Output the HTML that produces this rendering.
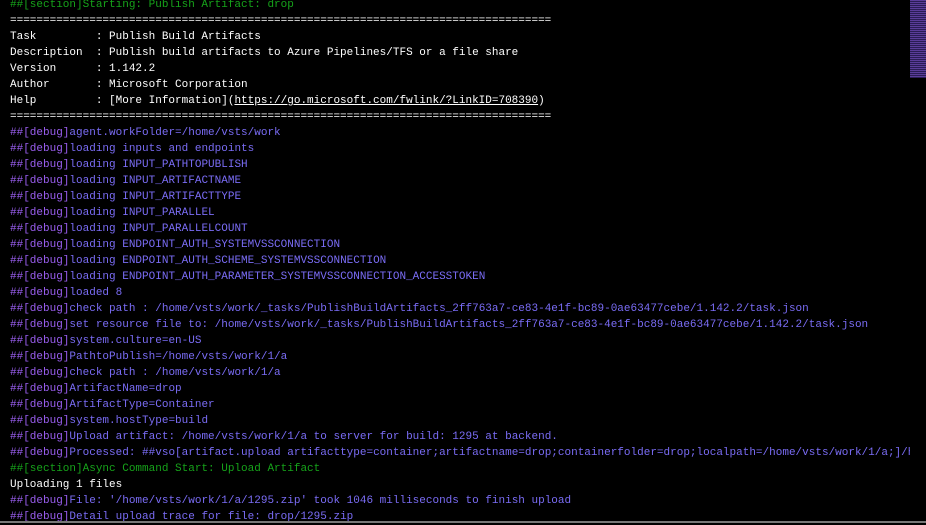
<!DOCTYPE html>
<html><head><style>
html,body{margin:0;padding:0;background:#000;width:926px;height:523px;overflow:hidden}
pre{position:absolute;left:10px;top:-3px;margin:0;font-family:"Liberation Mono",monospace;font-size:11px;line-height:16px;color:#fff;white-space:pre}
.g{color:#16a31a}.d{color:#9a5ef0}.b{color:#7a6cf5}.u{text-decoration:underline}
.mm{position:absolute;left:910px;top:0;width:16px;height:78px;background:repeating-linear-gradient(#5a3d9a 0 1px,#2a1d55 1px 2px);z-index:2}
.cl{position:absolute;left:910px;top:78px;width:16px;height:445px;background:#000;z-index:1}
.bar{position:absolute;left:0;top:521px;width:926px;height:2px;background:#777;z-index:3}
</style></head><body>
<pre><span class="g">##[section]Starting: Publish Artifact: drop</span>
==================================================================================
Task         : Publish Build Artifacts
Description  : Publish build artifacts to Azure Pipelines/TFS or a file share
Version      : 1.142.2
Author       : Microsoft Corporation
Help         : [More Information](<span class="u">https://go.microsoft.com/fwlink/?LinkID=708390</span>)
==================================================================================
<span class="d">##[debug]</span><span class="b">agent.workFolder=/home/vsts/work</span>
<span class="d">##[debug]</span><span class="b">loading inputs and endpoints</span>
<span class="d">##[debug]</span><span class="b">loading INPUT_PATHTOPUBLISH</span>
<span class="d">##[debug]</span><span class="b">loading INPUT_ARTIFACTNAME</span>
<span class="d">##[debug]</span><span class="b">loading INPUT_ARTIFACTTYPE</span>
<span class="d">##[debug]</span><span class="b">loading INPUT_PARALLEL</span>
<span class="d">##[debug]</span><span class="b">loading INPUT_PARALLELCOUNT</span>
<span class="d">##[debug]</span><span class="b">loading ENDPOINT_AUTH_SYSTEMVSSCONNECTION</span>
<span class="d">##[debug]</span><span class="b">loading ENDPOINT_AUTH_SCHEME_SYSTEMVSSCONNECTION</span>
<span class="d">##[debug]</span><span class="b">loading ENDPOINT_AUTH_PARAMETER_SYSTEMVSSCONNECTION_ACCESSTOKEN</span>
<span class="d">##[debug]</span><span class="b">loaded 8</span>
<span class="d">##[debug]</span><span class="b">check path : /home/vsts/work/_tasks/PublishBuildArtifacts_2ff763a7-ce83-4e1f-bc89-0ae63477cebe/1.142.2/task.json</span>
<span class="d">##[debug]</span><span class="b">set resource file to: /home/vsts/work/_tasks/PublishBuildArtifacts_2ff763a7-ce83-4e1f-bc89-0ae63477cebe/1.142.2/task.json</span>
<span class="d">##[debug]</span><span class="b">system.culture=en-US</span>
<span class="d">##[debug]</span><span class="b">PathtoPublish=/home/vsts/work/1/a</span>
<span class="d">##[debug]</span><span class="b">check path : /home/vsts/work/1/a</span>
<span class="d">##[debug]</span><span class="b">ArtifactName=drop</span>
<span class="d">##[debug]</span><span class="b">ArtifactType=Container</span>
<span class="d">##[debug]</span><span class="b">system.hostType=build</span>
<span class="d">##[debug]</span><span class="b">Upload artifact: /home/vsts/work/1/a to server for build: 1295 at backend.</span>
<span class="d">##[debug]</span><span class="b">Processed: ##vso[artifact.upload artifacttype=container;artifactname=drop;containerfolder=drop;localpath=/home/vsts/work/1/a;]/h</span>
<span class="g">##[section]Async Command Start: Upload Artifact</span>
Uploading 1 files
<span class="d">##[debug]</span><span class="b">File: '/home/vsts/work/1/a/1295.zip' took 1046 milliseconds to finish upload</span>
<span class="d">##[debug]</span><span class="b">Detail upload trace for file: drop/1295.zip</span></pre>
<div class="cl"></div>
<div class="mm"></div>
<div class="bar"></div>
</body></html>
